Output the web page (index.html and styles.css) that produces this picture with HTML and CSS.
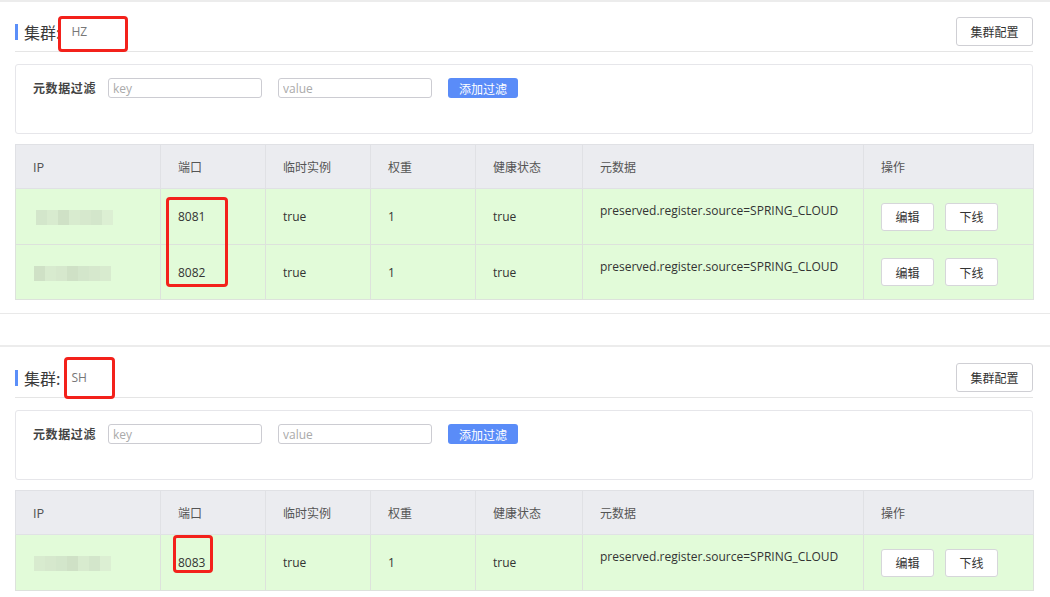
FILE: index.html
```html
<!DOCTYPE html>
<html lang="zh-CN">
<head>
<meta charset="utf-8">
<title>集群</title>
<link rel="stylesheet" href="styles.css">
</head>
<body>
<div class="page">

  <section class="cluster">
    <div class="head">
      <div class="title">
        <span class="bar"></span>
        <span class="name">集群:</span>
        <span class="value">HZ</span>
        <span class="mark mark-hz"></span>
      </div>
      <button class="btn">集群配置</button>
    </div>
    <div class="filter">
      <span class="filter-label">元数据过滤</span>
      <input class="inp" placeholder="key">
      <input class="inp" placeholder="value">
      <button class="btn-primary">添加过滤</button>
    </div>
    <div class="table-wrap">
      <table class="grid">
        <colgroup>
          <col class="c-ip"><col class="c-port"><col class="c-eph"><col class="c-w"><col class="c-h"><col class="c-meta"><col class="c-op">
        </colgroup>
        <thead>
          <tr><th>IP</th><th>端口</th><th>临时实例</th><th>权重</th><th>健康状态</th><th>元数据</th><th>操作</th></tr>
        </thead>
        <tbody>
          <tr class="r1">
            <td><span class="mosaic m-a"><i class="m1"></i><i class="m2"></i><i class="m3"></i><i class="m2"></i><i class="m4"></i><i class="m1"></i><i class="m5"></i></span></td>
            <td>8081</td><td>true</td><td>1</td><td>true</td>
            <td class="meta">preserved.register.source=SPRING_CLOUD</td>
            <td><div class="ops"><button class="btn-sm">编辑</button><button class="btn-sm">下线</button></div></td>
          </tr>
          <tr class="r2">
            <td><span class="mosaic m-b"><i class="m3"></i><i class="m2"></i><i class="m4"></i><i class="m3"></i><i class="m1"></i><i class="m4"></i><i class="m2"></i></span></td>
            <td>8082</td><td>true</td><td>1</td><td>true</td>
            <td class="meta">preserved.register.source=SPRING_CLOUD</td>
            <td><div class="ops"><button class="btn-sm">编辑</button><button class="btn-sm">下线</button></div></td>
          </tr>
        </tbody>
      </table>
      <span class="mark mark-p12"></span>
    </div>
  </section>

  <section class="cluster">
    <div class="head">
      <div class="title">
        <span class="bar"></span>
        <span class="name">集群:</span>
        <span class="value">SH</span>
        <span class="mark mark-sh"></span>
      </div>
      <button class="btn">集群配置</button>
    </div>
    <div class="filter">
      <span class="filter-label">元数据过滤</span>
      <input class="inp" placeholder="key">
      <input class="inp" placeholder="value">
      <button class="btn-primary">添加过滤</button>
    </div>
    <div class="table-wrap">
      <table class="grid">
        <colgroup>
          <col class="c-ip"><col class="c-port"><col class="c-eph"><col class="c-w"><col class="c-h"><col class="c-meta"><col class="c-op">
        </colgroup>
        <thead>
          <tr><th>IP</th><th>端口</th><th>临时实例</th><th>权重</th><th>健康状态</th><th>元数据</th><th>操作</th></tr>
        </thead>
        <tbody>
          <tr class="r1">
            <td><span class="mosaic m-b"><i class="m2"></i><i class="m4"></i><i class="m1"></i><i class="m3"></i><i class="m2"></i><i class="m1"></i><i class="m5"></i></span></td>
            <td>8083</td><td>true</td><td>1</td><td>true</td>
            <td class="meta">preserved.register.source=SPRING_CLOUD</td>
            <td><div class="ops"><button class="btn-sm">编辑</button><button class="btn-sm">下线</button></div></td>
          </tr>
        </tbody>
      </table>
      <span class="mark mark-p3"></span>
    </div>
  </section>

</div>
</body>
</html>
```

FILE: styles.css
```css
* { box-sizing: border-box; }

html, body {
  margin: 0;
  padding: 0;
  background: #fff;
}

body {
  font-family: "Open Sans", "Noto Sans CJK SC", sans-serif;
  font-size: 12px;
  color: #333;
  overflow: hidden;
}

.cluster {
  border-top: 2px solid #ececec;
  border-bottom: 1px solid #e9e9e9;
  padding: 15px 17px 13px 15px;
}

.cluster + .cluster {
  margin-top: 31px;
  padding-top: 16px;
}

.head {
  display: flex;
  align-items: center;
  justify-content: space-between;
  padding-bottom: 5px;
  border-bottom: 1px solid #e5e5e5;
}

.title {
  position: relative;
  display: flex;
  align-items: center;
  height: 22px;
}

.bar {
  width: 3px;
  height: 16px;
  background: #5b8ff9;
  margin-right: 6px;
}

.name {
  font-family: "Noto Sans CJK SC", sans-serif;
  font-size: 16px;
  color: #3a3a3a;
  line-height: 22px;
}

.value {
  margin-left: 11px;
  font-size: 12px;
  color: #777;
  line-height: 22px;
}

.btn {
  width: 77px;
  height: 29px;
  border: 1px solid #cfcfd4;
  border-radius: 3px;
  background: #fff;
  font-family: "Noto Sans CJK SC", sans-serif;
  font-size: 12px;
  color: #333;
  padding: 0;
}

.filter {
  margin-top: 12px;
  height: 70px;
  border: 1px solid #e6e6ea;
  border-radius: 3px;
  padding: 13px 17px;
  display: flex;
  align-items: flex-start;
}

.filter-label {
  font-family: "Noto Sans CJK SC", sans-serif;
  font-weight: bold;
  font-size: 12px;
  letter-spacing: 0.6px;
  color: #444;
  line-height: 20px;
  margin-right: 12px;
}

.inp {
  width: 154px;
  height: 20px;
  border: 1px solid #ccccd2;
  border-radius: 3px;
  padding: 0 4px;
  font-family: "Open Sans", sans-serif;
  font-size: 12px;
  margin: 0 16px 0 0;
  outline: none;
}

.inp::placeholder {
  color: #aaa;
}

.btn-primary {
  width: 70px;
  height: 20px;
  border: none;
  border-radius: 3px;
  background: #5a8cf8;
  color: #fff;
  font-family: "Noto Sans CJK SC", sans-serif;
  font-size: 12px;
  padding: 0;
}

.table-wrap {
  position: relative;
  margin-top: 10px;
}

.grid {
  width: 1018px;
  border-collapse: collapse;
  table-layout: fixed;
}

.c-ip { width: 145px; }
.c-port { width: 105px; }
.c-eph { width: 105px; }
.c-w { width: 105px; }
.c-h { width: 107px; }
.c-meta { width: 281px; }
.c-op { width: 170px; }

.grid th,
.grid td {
  border: 1px solid #dde2dc;
  text-align: left;
  padding: 0 0 0 17px;
}

.grid th {
  height: 44px;
  background: #ebecf0;
  font-family: "Noto Sans CJK SC", sans-serif;
  font-weight: normal;
  color: #555;
  font-size: 12px;
  border-color: #e0e1e5;
}

.grid td {
  background: #e2fbd9;
  height: 56px;
  color: #333;
}

.grid .r2 td { height: 55px; }

.grid .meta {
  vertical-align: top;
  padding-top: 13px;
}

.ops {
  display: flex;
  gap: 11px;
}

.btn-sm {
  width: 53px;
  height: 28px;
  border: 1px solid #d6d6da;
  border-radius: 3px;
  background: #fff;
  font-family: "Noto Sans CJK SC", sans-serif;
  font-size: 12px;
  color: #333;
  padding: 0;
}

.mosaic {
  display: inline-flex;
  vertical-align: middle;
}

.m-a { margin-left: 3px; }
.m-b { margin-left: 1px; }

.mosaic i {
  display: block;
  width: 11px;
  height: 15px;
}

.m1 { background: #d3e6cb; }
.m2 { background: #d8ebcf; }
.m3 { background: #cfe1c6; }
.m4 { background: #d6e8cd; }
.m5 { background: #dcefd3; }

.mark {
  position: absolute;
  border: 3px solid #f3211b;
  border-radius: 4px;
  pointer-events: none;
}

.mark-hz { left: 43px; top: -5px; width: 70px; height: 36px; }
.mark-sh { left: 49px; top: -10px; width: 51px; height: 42px; }
.mark-p12 { left: 151px; top: 53px; width: 62px; height: 90px; }
.mark-p3 { left: 158px; top: 45px; width: 40px; height: 38px; }
```
